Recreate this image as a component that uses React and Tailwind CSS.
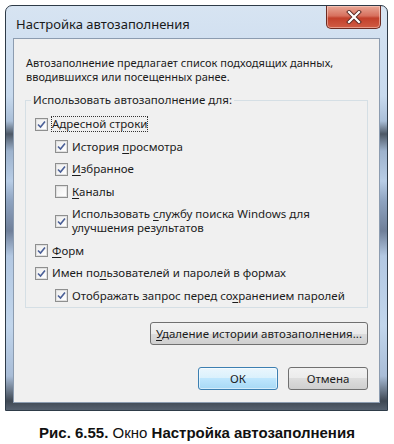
import React, { useState } from 'react';

const font = "font-['Noto_Sans','Open_Sans',sans-serif]";

const Check = ({ checked }) => (
  <span className="flex h-[13px] w-[13px] shrink-0 items-center justify-center border border-[#8e8f8f] bg-[linear-gradient(135deg,#dcdcdc,#ffffff)]">
    <span className="flex h-[11px] w-[11px] items-center justify-center border border-[#e0e0e0] bg-[linear-gradient(135deg,#eeeeee,#ffffff)]">
      {checked && (
        <svg width="9" height="9" viewBox="0 0 9 9">
          <path d="M1 4.5 L3.5 7 L8 1.5" fill="none" stroke="#4a5f97" strokeWidth="1.6" />
        </svg>
      )}
    </span>
  </span>
);

// text with one underlined access key
const Label = ({ before, keyChar, after }) => (
  <>
    {before}
    <span className="underline underline-offset-2">{keyChar}</span>
    {after}
  </>
);

const Row = ({ level, checked, focus, children }) => (
  <div className={`flex items-center py-[4.25px] ${level === 2 ? 'pl-[20px]' : ''}`}>
    <Check checked={checked} />
    <span
      className={`ml-[4px] leading-[14px] ${focus ? 'outline outline-1 outline-dotted outline-[#333]' : ''}`}
    >
      {children}
    </span>
  </div>
);

export default function App() {
  const [opts] = useState({
    address: true,
    history: true,
    favorites: true,
    feeds: false,
    search: true,
    forms: true,
    passwords: true,
    prompt: true,
  });

  return (
    <div className={`relative h-[444px] w-[394px] overflow-hidden bg-white ${font}`}>
      {/* Window frame */}
      <div className="ml-[5px] mt-[5px] flex h-[406px] w-[383px] flex-col rounded-t-[7px] border border-[#2e3b48] bg-[linear-gradient(180deg,#d7e4f2_0px,#c8daee_90px,#aabfd8_115px,#4d5866_128px,#9db2cc_145px,#b8cde6_175px,#8ea3c0_195px,#6f7f99_225px,#b3c8e2_250px,#c2d6ec_320px,#a9bdd7_370px,#3f4853_395px,#5b6776_406px)]">
        {/* Title bar */}
        <div className="flex h-[32px] items-start justify-between">
          <span className="ml-[10px] mt-[10px] text-[13px] leading-[17px] text-[#1a1a1a]">
            Настройка автозаполнения
          </span>
          <button className="mr-[6px] flex h-[23px] w-[55px] items-center justify-center rounded-b-[5px] border border-t-0 border-[#6c2b22] bg-[linear-gradient(180deg,#e9a796_0%,#d7705d_45%,#c2402b_55%,#d05c44_100%)] shadow-[inset_0_0_0_1px_rgba(255,220,210,0.5)]">
            <svg width="16" height="14" viewBox="0 0 16 14">
              <path d="M3 2 L13 12 M13 2 L3 12" stroke="#5a2a24" strokeWidth="4" strokeLinecap="square" />
              <path d="M3 2 L13 12 M13 2 L3 12" stroke="#ffffff" strokeWidth="2.2" strokeLinecap="square" />
            </svg>
          </button>
        </div>

        {/* Client area */}
        <div className="mx-[7px] mb-[7px] flex flex-1 flex-col border border-[#8c9cb0] bg-[#f0f0f0] px-[11px] text-[11.5px] text-[#1c1c1c]">
          <p className="mt-[17px] pl-[1px] text-[11px] leading-[14px]">
            Автозаполнение предлагает список подходящих данных,
            <br />
            вводившихся или посещенных ранее.
          </p>

          <fieldset className="mt-[9px] border border-[#d5dfe5] pb-0 pl-[9px] pt-[6px]">
            <legend className="ml-[-4px] px-[2px] leading-[14px]">Использовать автозаполнение для:</legend>
            <Row level={1} checked={opts.address} focus>
              Адресной строки
            </Row>
            <Row level={2} checked={opts.history}>
              <Label before="История " keyChar="п" after="росмотра" />
            </Row>
            <Row level={2} checked={opts.favorites}>
              <Label before="" keyChar="И" after="збранное" />
            </Row>
            <Row level={2} checked={opts.feeds}>
              <Label before="" keyChar="К" after="аналы" />
            </Row>
            <Row level={2} checked={opts.search}>
              <Label before="Использовать " keyChar="с" after="лужбу поиска Windows для" />
              <br />
              улучшения результатов
            </Row>
            <Row level={1} checked={opts.forms}>
              <Label before="" keyChar="Ф" after="орм" />
            </Row>
            <Row level={1} checked={opts.passwords}>
              <Label before="Имен по" keyChar="л" after="ьзователей и паролей в формах" />
            </Row>
            <Row level={2} checked={opts.prompt}>
              <Label before="Отображать запрос перед со" keyChar="х" after="ранением паролей" />
            </Row>
          </fieldset>

          <div className="mt-[14px] flex justify-end">
            <button className="h-[23px] w-[218px] rounded-[3px] border border-[#707070] bg-[linear-gradient(180deg,#f2f2f2_0%,#ebebeb_50%,#dddddd_50%,#cfcfcf_100%)] leading-[14px]">
              <Label before="" keyChar="У" after="даление истории автозаполнения..." />
            </button>
          </div>

          <div className="mt-[22px] flex justify-end gap-[10px]">
            <button className="h-[23px] w-[80px] rounded-[3px] border border-[#3c7fb1] bg-[linear-gradient(180deg,#eaf6fd_0%,#d9f0fc_50%,#bee6fd_50%,#a7d9f5_100%)] shadow-[inset_0_0_0_1px_#ffffff80]">
              ОК
            </button>
            <button className="h-[23px] w-[80px] rounded-[3px] border border-[#707070] bg-[linear-gradient(180deg,#f2f2f2_0%,#ebebeb_50%,#dddddd_50%,#cfcfcf_100%)]">
              Отмена
            </button>
          </div>
        </div>
      </div>

      {/* Caption */}
      <p className="mt-[13px] text-center font-['Liberation_Sans',Arial,sans-serif] text-[15px] leading-[18px] text-[#111]">
        <b>Рис. 6.55.</b> Окно <b>Настройка автозаполнения</b>
      </p>
    </div>
  );
}
